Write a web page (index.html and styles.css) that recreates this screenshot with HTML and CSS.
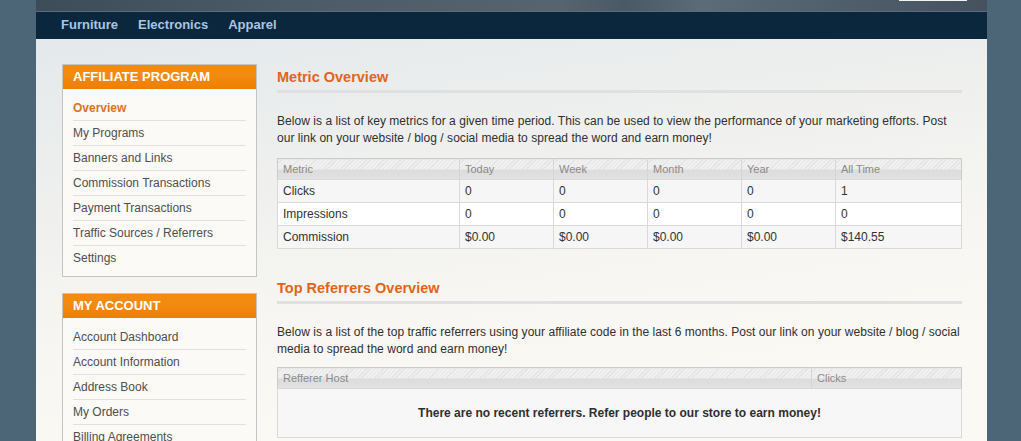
FILE: index.html
```html
<!DOCTYPE html>
<html>
<head>
<meta charset="utf-8">
<link rel="stylesheet" href="styles.css">
</head>
<body>
<div class="wrapper">
  <div class="header"><div class="search"></div></div>
  <nav class="nav">
    <a href="#">Furniture</a>
    <a href="#">Electronics</a>
    <a href="#">Apparel</a>
  </nav>
  <div class="main">
    <aside class="sidebar">
      <div class="block">
        <div class="block-title">Affiliate Program</div>
        <ul class="block-list">
          <li class="current">Overview</li>
          <li>My Programs</li>
          <li>Banners and Links</li>
          <li>Commission Transactions</li>
          <li>Payment Transactions</li>
          <li>Traffic Sources / Referrers</li>
          <li>Settings</li>
        </ul>
      </div>
      <div class="block">
        <div class="block-title">My Account</div>
        <ul class="block-list">
          <li>Account Dashboard</li>
          <li>Account Information</li>
          <li>Address Book</li>
          <li>My Orders</li>
          <li>Billing Agreements</li>
          <li>Recurring Profiles</li>
        </ul>
      </div>
    </aside>
    <section class="content">
      <h2 class="section-title">Metric Overview</h2>
      <p class="intro">Below is a list of key metrics for a given time period. This can be used to view the performance of your marketing efforts. Post our link on your website / blog / social media to spread the word and earn money!</p>
      <table class="data">
        <colgroup>
          <col class="c-metric"><col class="c-num"><col class="c-num"><col class="c-num"><col class="c-num"><col>
        </colgroup>
        <thead>
          <tr><th>Metric</th><th>Today</th><th>Week</th><th>Month</th><th>Year</th><th>All Time</th></tr>
        </thead>
        <tbody>
          <tr class="odd"><td>Clicks</td><td>0</td><td>0</td><td>0</td><td>0</td><td>1</td></tr>
          <tr class="even"><td>Impressions</td><td>0</td><td>0</td><td>0</td><td>0</td><td>0</td></tr>
          <tr class="odd"><td>Commission</td><td>$0.00</td><td>$0.00</td><td>$0.00</td><td>$0.00</td><td>$140.55</td></tr>
        </tbody>
      </table>

      <h2 class="section-title second">Top Referrers Overview</h2>
      <p class="intro">Below is a list of the top traffic referrers using your affiliate code in the last 6 months. Post our link on your website / blog / social media to spread the word and earn money!</p>
      <table class="data">
        <colgroup><col class="c-host"><col></colgroup>
        <thead>
          <tr><th>Refferer Host</th><th>Clicks</th></tr>
        </thead>
        <tbody>
          <tr class="empty"><td colspan="2">There are no recent referrers. Refer people to our store to earn money!</td></tr>
        </tbody>
      </table>
    </section>
  </div>
</div>
</body>
</html>
```
FILE: styles.css
```css
html, body {
  margin: 0;
  padding: 0;
}
body {
  background: #4c6678;
  font-family: "Liberation Sans", Arial, sans-serif;
  font-size: 12px;
  color: #2f2f2f;
  overflow: hidden;
}
.wrapper {
  width: 951px;
  margin-left: 36px;
}
.header {
  position: relative;
  height: 11px;
  background: linear-gradient(100deg, #3d4c59 0%, #4b5a67 25%, #56646f 55%, #4a5966 62%, #5b6b77 70%, #44525f 100%);
  border-bottom: 1px solid #5d6c78;
}
.search {
  position: absolute;
  left: 863px;
  top: 0;
  width: 68px;
  height: 1px;
  background: #f2f2f2;
}
.nav {
  height: 27px;
  background: #0b273d;
  padding-left: 25px;
  display: flex;
  align-items: center;
  gap: 20px;
}
.nav a {
  color: #a7c6e4;
  font-weight: bold;
  font-size: 13px;
  text-decoration: none;
  line-height: 25px;
  padding-bottom: 2px;
}
.main {
  display: flex;
  gap: 20px;
  padding: 25px 25px 40px 26px;
  min-height: 400px;
  background: linear-gradient(172deg, #e3e9ec 0%, #eceeed 20%, #f7f6f2 50%, #fbf9f4 70%);
}
.sidebar {
  width: 195px;
  flex: none;
}
.block {
  border: 1px solid #c4c4c4;
  background: #fbfaf6;
  margin-bottom: 16px;
}
.block-title {
  height: 24px;
  line-height: 24px;
  padding-left: 10px;
  background: linear-gradient(to bottom, #f28a0e, #f38b12 40%, #ef7e00);
  color: #fff;
  font-weight: bold;
  font-size: 13px;
  text-transform: uppercase;
}
.block-list {
  list-style: none;
  margin: 0;
  padding: 7px 10px 6px;
}
.block-list li {
  height: 24px;
  line-height: 24px;
  border-bottom: 1px solid #e3e0da;
  color: #4f4f4f;
  font-size: 12px;
}
.block-list li:last-child {
  border-bottom: 0;
}
.block-list li.current {
  color: #d8742a;
  font-weight: bold;
}
.content {
  width: 685px;
  flex: none;
  padding-top: 4px;
}
.section-title {
  margin: 0;
  font-size: 14.5px;
  line-height: 18px;
  font-weight: bold;
  color: #e2641b;
  padding-bottom: 4px;
  border-bottom: 3px solid #e0e0e0;
}
.section-title.second {
  margin-top: 30px;
}
.intro {
  margin: 20px 0 11px;
  line-height: 17px;
  font-size: 12px;
  letter-spacing: 0.04px;
}
.section-title.second + .intro {
  margin-bottom: 9px;
}
.data {
  width: 685px;
  border-collapse: collapse;
  border: 1px solid #cbcbcb;
  table-layout: fixed;
}
.c-metric { width: 182px; }
.c-num { width: 94px; }
.c-host { width: 534px; }
.data th {
  height: 20px;
  padding: 0 5px;
  text-align: left;
  font-weight: normal;
  font-size: 11px;
  color: #8a8a8a;
  border-left: 1px solid #d6d6d6;
  background:
    linear-gradient(to bottom, rgba(0,0,0,0) 0, rgba(0,0,0,0) 52%, #dcdcdc 52%, #e2e2e2 100%),
    repeating-linear-gradient(135deg, #f2f2f2 0, #f2f2f2 2px, #e0e0e0 2px, #e0e0e0 3px);
}
.data th:first-child { border-left: 0; }
.data td {
  height: 22px;
  padding: 0 5px;
  font-size: 12px;
  color: #333;
  border: 1px solid #d9d9d9;
}
.data tr.odd td { background: #f6f6f6; }
.data tr.even td { background: #ffffff; }
.data tr.empty td {
  height: 48px;
  background: #f7f7f7;
  text-align: center;
  font-weight: bold;
  color: #2f2f2f;
}
```
